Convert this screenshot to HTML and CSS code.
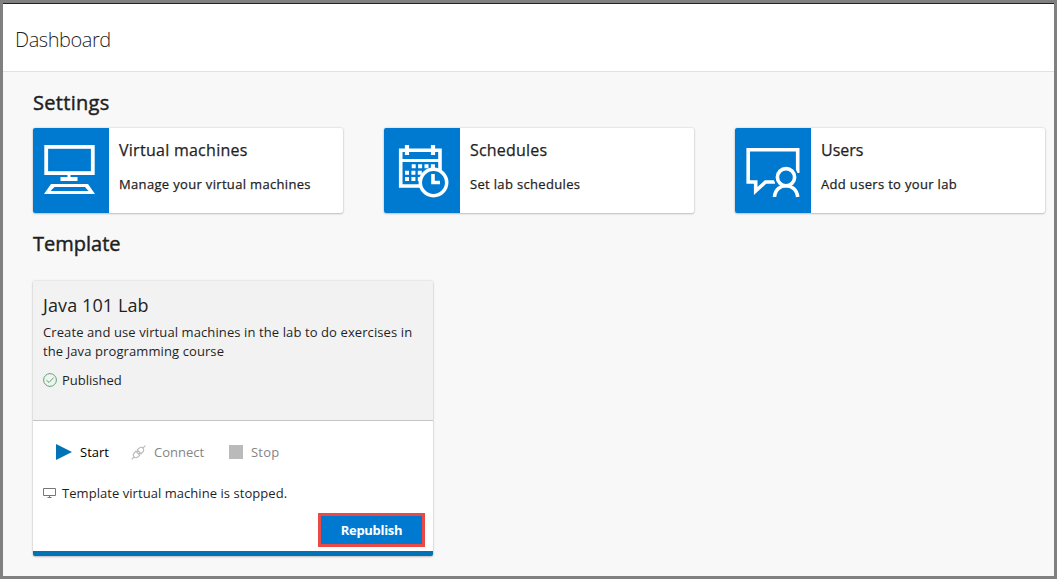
FILE: index.html
```html
<!DOCTYPE html>
<html lang="en">
<head>
<meta charset="utf-8">
<title>Dashboard</title>
<link rel="stylesheet" href="styles.css">
</head>
<body>
<div class="frame">
  <header class="header"><h1 class="page-title">Dashboard</h1></header>
  <main class="content">
    <h2 class="section-title">Settings</h2>
    <div class="tiles">
      <a class="tile">
        <span class="tile-icon">
          <svg width="76" height="85" viewBox="0 0 76 85" fill="none" stroke="#fff">
            <rect x="13.2" y="18.9" width="46.6" height="26.2" stroke-width="3.8"/>
            <path d="M36 46v5" stroke-width="3"/>
            <path d="M27.5 51h17" stroke-width="4"/>
            <path fill="#fff" fill-rule="evenodd" stroke="none" d="M18 56H55L62 66H11ZM21.500 59L17.500 63H55.500L52 59Z"/>
          </svg>
        </span>
        <span class="tile-text"><span class="tile-title">Virtual machines</span><span class="tile-sub">Manage your virtual machines</span></span>
      </a>
      <a class="tile">
        <span class="tile-icon">
          <svg width="76" height="85" viewBox="0 0 76 85" fill="none" stroke="#fff">
            <path d="M36 58H16.700V22.200H56V42" stroke-width="3.600"/>
            <path d="M16 32.500H57" stroke-width="3"/>
            <path d="M23 17V27M49 17V27" stroke-width="4.200"/>
            <path d="M27.700 38.200H52" stroke-width="4" stroke-dasharray="4 2.400"/>
            <path d="M21 44.700H38" stroke-width="4" stroke-dasharray="4 2.400"/>
            <path d="M21 51H36" stroke-width="4" stroke-dasharray="4 2.400"/>
            <circle cx="49.500" cy="54.500" r="13.200" fill="#007ad1" stroke-width="3.500"/>
            <path d="M49 46V54.500H56" stroke-width="3.600"/>
          </svg>
        </span>
        <span class="tile-text"><span class="tile-title schedules">Schedules</span><span class="tile-sub">Set lab schedules</span></span>
      </a>
      <a class="tile">
        <span class="tile-icon">
          <svg width="76" height="85" viewBox="0 0 76 85" fill="none" stroke="#fff" stroke-width="3.600">
            <path d="M62.700 45V21.700H13.200V54H20.700V63L30.500 54H40"/>
            <circle cx="51" cy="49.200" r="12.300" fill="#007ad1" stroke="none"/>
            <circle cx="51" cy="49.200" r="8.600"/>
            <path d="M39.500 69C40 61 46 57.700 51 57.700S62 61 62.700 69"/>
          </svg>
        </span>
        <span class="tile-text"><span class="tile-title users">Users</span><span class="tile-sub">Add users to your lab</span></span>
      </a>
    </div>
    <h2 class="section-title template-title">Template</h2>
    <section class="card">
      <div class="card-top">
        <h3 class="lab-name">Java 101 Lab</h3>
        <p class="description">Create and use virtual machines in the lab to do exercises in<br>the Java programming course</p>
        <div class="status">
          <svg width="14" height="14" viewBox="0 0 14 14" fill="none" stroke="#57a86b"><circle cx="7" cy="7" r="6.400"/><path d="M3.500 7.200L6 9.500L10.700 4.500"/></svg>
          <span>Published</span>
        </div>
      </div>
      <div class="card-body">
        <div class="actions">
          <span class="action start"><svg width="16" height="16" viewBox="0 0 16 16"><path fill="#0072b8" d="M0 0L16 8L0 16Z"/></svg><span>Start</span></span>
          <span class="action connect"><svg width="15" height="15" viewBox="0 0 16 16" fill="none" stroke="#b9b9b9" stroke-width="1.200"><path d="M.7 15.300L3.300 12.700M12.700 3.300L15.300 .7M3.300 12.700C1.500 10.800 2.500 9 5.300 6.700L9.300 10.700C7 13.500 5.200 14.500 3.300 12.700ZM12.700 3.300C14.500 5.200 13.500 7 10.700 9.300L6.700 5.300C9 2.500 10.800 1.500 12.700 3.300ZM6.300 7.700L7.800 6.300M8.300 9.700L9.700 8.200"/></svg><span>Connect</span></span>
          <span class="action stop"><svg width="14" height="14" viewBox="0 0 14 14"><path fill="#bababa" d="M0 0H14V14H0Z"/></svg><span>Stop</span></span>
        </div>
        <div class="machine">
          <svg width="13" height="10" viewBox="0 0 13 10" fill="none" stroke="#777"><path d="M.5 .5H12.500V7.500H.5ZM4.500 9.500H8.500M6.500 8V9"/></svg>
          <span>Template virtual machine is stopped.</span>
        </div>
        <button class="republish">Republish</button>
      </div>
    </section>
  </main>
</div>
</body>
</html>
```
FILE: styles.css
```css
* { box-sizing: border-box; }
body { margin: 0; font-family: "Open Sans", "Noto Sans", sans-serif; color: #1f1f1f; }
h1, h2, h3, p { margin: 0; }
span, h1, h2, h3, p { white-space: nowrap; }
svg { display: block; flex: none; }
.frame { width: 1057px; height: 579px; border: 3px solid #808080; background: #f8f8f8; overflow: hidden; }
.header { height: 69px; background: #fff; border-top: 1px solid #222; border-bottom: 1px solid #e1e1e1; padding: 21px 12px 0; }
.page-title { font-size: 20px; line-height: 30px; font-weight: 300; letter-spacing: -.45px; }
.content { padding: 17px 8px 0 30px; }
.section-title { font-size: 20px; line-height: 28px; font-weight: 400; letter-spacing: .3px; -webkit-text-stroke: .45px #1f1f1f; }
.tiles { display: grid; grid-template-columns: repeat(3, 310px); column-gap: 41px; margin-top: 11px; }
.tile { display: flex; height: 85px; background: #fff; border-radius: 2px; overflow: hidden; box-shadow: 0 0 2px rgba(0,0,0,.22), 0 1px 2px rgba(0,0,0,.18); }
.tile-icon { width: 76px; background: #007ad1; }
.tile-text { display: flex; flex-direction: column; padding: 10px 10px 0; }
.tile-title { font-size: 16px; line-height: 24px; letter-spacing: .27px; -webkit-text-stroke: .25px #1f1f1f; }
.schedules { letter-spacing: .2px; }
.users { letter-spacing: 0; }
.tile-sub { font-size: 13px; line-height: 20px; margin-top: 12px; letter-spacing: .33px; -webkit-text-stroke: .25px #1f1f1f; }
.template-title { margin-top: 17px; letter-spacing: 0; }
.card { width: 400px; height: 275px; margin-top: 23px; border-radius: 2px; overflow: hidden; background: #fff; border-bottom: 5px solid #0072b8; box-shadow: 0 0 2px rgba(0,0,0,.22), 0 1px 2px rgba(0,0,0,.18); }
.card-top { height: 140px; padding: 11px 10px 0; background: #f2f2f2; border-bottom: 1px solid #c4c4c4; }
.lab-name { font-size: 18px; line-height: 26px; font-weight: 400; letter-spacing: .1px; }
.description { font-size: 13px; line-height: 19px; margin-top: 5px; letter-spacing: .1px; }
.status { display: flex; align-items: center; gap: 5px; font-size: 13px; line-height: 20px; margin-top: 9px; }
.card-body { display: flex; flex-direction: column; height: 130px; padding: 21px 8px 4px 10px; }
.actions { display: flex; padding-left: 13px; font-size: 13px; line-height: 20px; }
.action { display: flex; align-items: center; }
.start { width: 75px; gap: 8px; color: #000; }
.connect { width: 98px; gap: 8px; color: #858585; }
.stop { gap: 8px; color: #858585; letter-spacing: .2px; }
.machine { display: flex; align-items: center; gap: 6px; margin-top: 21px; font-size: 13px; line-height: 20px; letter-spacing: .05px; }
.republish { align-self: flex-end; width: 107px; height: 34px; margin-top: auto; padding: 0; border: 3px solid #ea4a45; background: #007ad1; color: #fff; font: 700 13px/26px "Open Sans", sans-serif; letter-spacing: -.3px; }
```
